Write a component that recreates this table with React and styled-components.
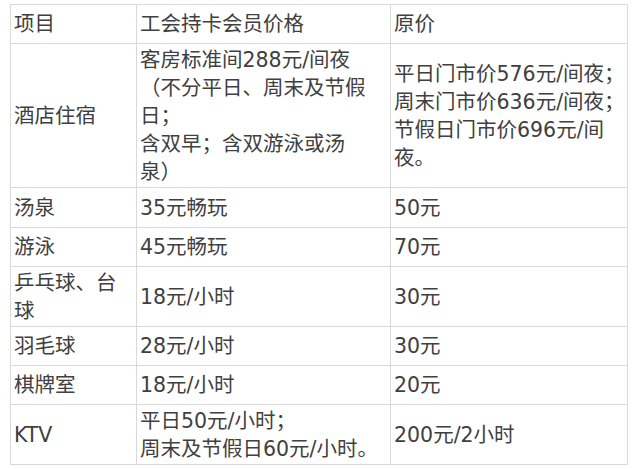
import React from 'react'
import styled, { createGlobalStyle } from 'styled-components'

const GlobalStyle = createGlobalStyle`
  html, body {
    margin: 0;
    padding: 0;
    background: #ffffff;
  }
`

const columns = [126, 254, 237]

const rows = [
  { h: 39, cells: [['项目'], ['工会持卡会员价格'], ['原价']] },
  {
    h: 144,
    cells: [
      ['酒店住宿'],
      ['客房标准间288元/间夜', '（不分平日、周末及节假', '日；', '含双早；含双游泳或汤', '泉）'],
      ['平日门市价576元/间夜；', '周末门市价636元/间夜；', '节假日门市价696元/间', '夜。'],
    ],
  },
  { h: 40, cells: [['汤泉'], ['35元畅玩'], ['50元']] },
  { h: 39, cells: [['游泳'], ['45元畅玩'], ['70元']] },
  { h: 60, cells: [['乒乓球、台', '球'], ['18元/小时'], ['30元']] },
  { h: 39, cells: [['羽毛球'], ['28元/小时'], ['30元']] },
  { h: 39, cells: [['棋牌室'], ['18元/小时'], ['20元']] },
  { h: 60, cells: [['KTV'], ['平日50元/小时；', '周末及节假日60元/小时。'], ['200元/2小时']] },
]

const Page = styled.div`
  padding: 4px 0 0 10px;
`

const Table = styled.table`
  border-collapse: collapse;
  table-layout: fixed;
  width: 618px;
  font-family: "DejaVu Sans", "Noto Sans CJK SC", sans-serif;
  font-size: 20.5px;
  line-height: 28px;
  color: #404040;
`

const Col = styled.col`
  width: ${p => p.$w}px;
`

const Row = styled.tr`
  height: ${p => p.$h}px;
`

const Cell = styled.td`
  border: 1px solid #d9d9d9;
  padding: 0 2px 0 3px;
  vertical-align: middle;
  white-space: nowrap;
`

export default function App() {
  return (
    <Page>
      <GlobalStyle />
      <Table>
        <colgroup>
          {columns.map((w, i) => (
            <Col key={i} $w={w} />
          ))}
        </colgroup>
        <tbody>
          {rows.map((row, i) => (
            <Row key={i} $h={row.h}>
              {row.cells.map((lines, j) => (
                <Cell key={j}>
                  {lines.map((l, k) => (
                    <React.Fragment key={k}>
                      {k > 0 && <br />}
                      {l}
                    </React.Fragment>
                  ))}
                </Cell>
              ))}
            </Row>
          ))}
        </tbody>
      </Table>
    </Page>
  )
}
